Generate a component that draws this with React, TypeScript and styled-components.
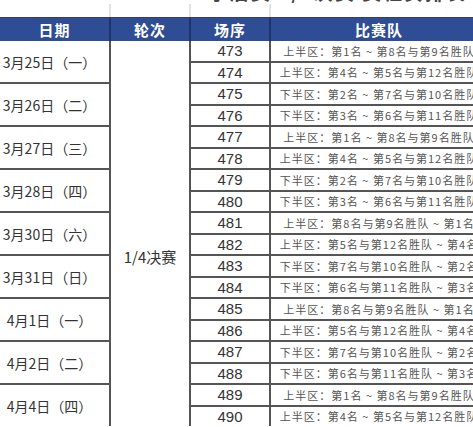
import React from "react";
import styled, { createGlobalStyle } from "styled-components";

const GlobalStyle = createGlobalStyle`
  html, body {
    margin: 0;
    padding: 0;
    background: #ffffff;
    overflow: hidden;
  }
  body {
    font-family: "Noto Sans CJK SC", "Noto Sans", sans-serif;
  }
`;

const COLS = "109px 78px 78px 216px";

const Page = styled.div`
  width: 473px;
  height: 427px;
  overflow: hidden;
  background: #fff;
`;

const TitleStrip = styled.div`
  height: 3px;
  overflow: hidden;
  display: flex;
  justify-content: center;
`;

const Title = styled.div`
  margin-top: -22px;
  margin-left: 100px;
  font-size: 19px;
  font-weight: 700;
  color: #444;
  white-space: nowrap;
  letter-spacing: 2px;
`;

const BlankRow = styled.div`
  display: grid;
  grid-template-columns: ${COLS};
  column-gap: 2px;
  height: 13px;
  background: #e2e2e2;
  margin-top: 1px;
  & > div {
    background: #fff;
  }
`;

const Header = styled.div`
  display: grid;
  grid-template-columns: ${COLS};
  column-gap: 2px;
  height: 23px;
  background: #1d356d;
  border-top: 1px solid #3a3f55;
`;

const HeadCell = styled.div`
  background: #2e4d94;
  color: #fff;
  font-weight: 700;
  font-size: 15px;
  display: flex;
  align-items: center;
  justify-content: center;
  letter-spacing: 1px;
`;

const Body = styled.div`
  display: grid;
  grid-template-columns: ${COLS};
  grid-auto-rows: 19.5px;
  gap: 2px;
  background: #555;
`;

const Cell = styled.div`
  background: #fff;
  display: flex;
  align-items: center;
  justify-content: center;
  white-space: nowrap;
  overflow: hidden;
`;

const DateCell = styled(Cell)<{ $index: number }>`
  grid-column: 1;
  grid-row: ${(p) => p.$index * 2 + 1} / span 2;
  font-size: 14px;
  color: #333;
  padding-right: 10px;
`;

const RoundCell = styled(Cell)`
  align-items: flex-start;
  padding-top: 205px;
  font-size: 15px;
  color: #333;
  grid-column: 2;
  grid-row: 1 / span 18;
`;

const SeqCell = styled(Cell)<{ $row: number }>`
  font-family: "Liberation Sans", Arial, sans-serif;
  font-size: 15px;
  color: #333;
  grid-column: 3;
  grid-row: ${(p) => p.$row};
`;

const TeamCell = styled(Cell)<{ $row: number }>`
  font-size: 11px;
  letter-spacing: 1px;
  color: #555;
  grid-column: 4;
  grid-row: ${(p) => p.$row};
`;

const dates = [
  "3月25日（一）",
  "3月26日（二）",
  "3月27日（三）",
  "3月28日（四）",
  "3月30日（六）",
  "3月31日（日）",
  "4月1日（一）",
  "4月2日（二）",
  "4月4日（四）",
];

const teams = [
  "上半区：第1名 ~ 第8名与第9名胜队",
  "上半区：第4名 ~ 第5名与第12名胜队",
  "下半区：第2名 ~ 第7名与第10名胜队",
  "下半区：第3名 ~ 第6名与第11名胜队",
  "上半区：第1名 ~ 第8名与第9名胜队",
  "上半区：第4名 ~ 第5名与第12名胜队",
  "下半区：第2名 ~ 第7名与第10名胜队",
  "下半区：第3名 ~ 第6名与第11名胜队",
  "上半区：第8名与第9名胜队 ~ 第1名",
  "上半区：第5名与第12名胜队 ~ 第4名",
  "下半区：第7名与第10名胜队 ~ 第2名",
  "下半区：第6名与第11名胜队 ~ 第3名",
  "上半区：第8名与第9名胜队 ~ 第1名",
  "上半区：第5名与第12名胜队 ~ 第4名",
  "下半区：第7名与第10名胜队 ~ 第2名",
  "下半区：第6名与第11名胜队 ~ 第3名",
  "上半区：第1名 ~ 第8名与第9名胜队",
  "上半区：第4名 ~ 第5名与第12名胜队",
];

const App = () => {
  return (
    <Page>
      <GlobalStyle />
      <TitleStrip>
        <Title>2024 CBA季后赛 1/4决赛 赛程安排表</Title>
      </TitleStrip>
      <BlankRow>
        <div />
        <div />
        <div />
        <div />
      </BlankRow>
      <Header>
        <HeadCell>日期</HeadCell>
        <HeadCell>轮次</HeadCell>
        <HeadCell>场序</HeadCell>
        <HeadCell>比赛队</HeadCell>
      </Header>
      <Body>
        <RoundCell>1/4决赛</RoundCell>
        {dates.map((d, i) => (
          <DateCell key={d} $index={i}>
            {d}
          </DateCell>
        ))}
        {teams.map((t, i) => (
          <React.Fragment key={i}>
            <SeqCell $row={i + 1}>{473 + i}</SeqCell>
            <TeamCell $row={i + 1}>{t}</TeamCell>
          </React.Fragment>
        ))}
      </Body>
    </Page>
  );
};

export default App;
